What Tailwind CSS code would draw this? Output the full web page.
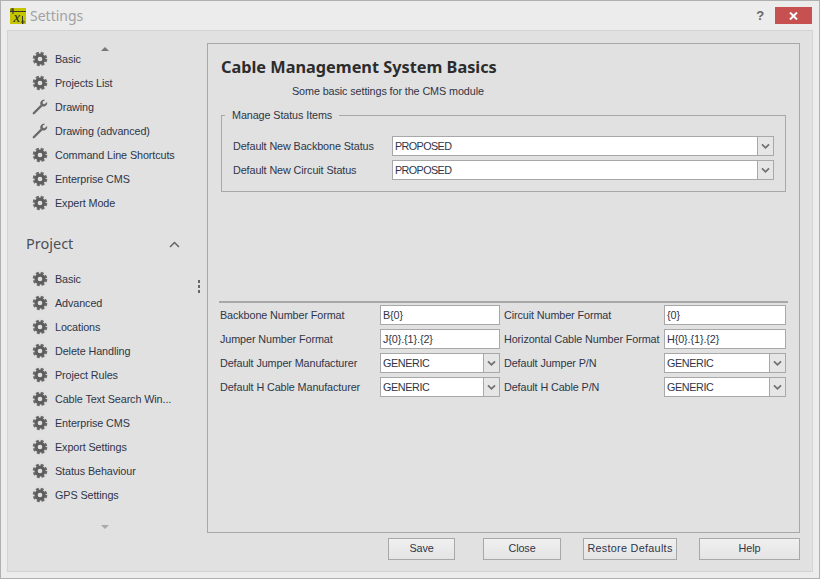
<!DOCTYPE html>
<html lang="en">
<head>
<meta charset="UTF-8">
<title>Settings</title>
<script src="https://cdn.jsdelivr.net/npm/@tailwindcss/browser@4"></script>
</head>
<body class="m-0 overflow-hidden">
<svg class="hidden">
  <symbol id="gear" viewBox="0 0 16 16">
    <circle cx="8" cy="8" r="5.8" fill="none" stroke="#6a6a6a" stroke-width="3" stroke-dasharray="2.8 1.75"/>
    <circle cx="8" cy="8" r="3.9" fill="none" stroke="#5e5e5e" stroke-width="3.2"/>
  </symbol>
  <symbol id="wrench" viewBox="0 0 18 18">
    <path d="M2 16 L10 8" stroke="#6a6a6a" stroke-width="2.6" stroke-linecap="round" fill="none"/>
    <path d="M17 3.4 L14 6 L12 5 L12.2 2.8 L14.8 1 C11.4 0.4 8.8 2.8 9.4 6.2 L11.4 8.4 C15 9 17.6 7 17 3.4 Z" fill="#6a6a6a"/>
  </symbol>
  <symbol id="chev" viewBox="0 0 10 8">
    <path d="M1 1.5 L5 5.5 L9 1.5" fill="none" stroke="#707070" stroke-width="2"/>
  </symbol>
</svg>

<div class="w-[820px] h-[579px] bg-[#ececec] border border-[#b0b0b0] flex flex-col text-[#2f3547] text-[10.8px] tracking-[-0.1px] whitespace-nowrap font-['Liberation_Sans',sans-serif]">
  <!-- title bar -->
  <div class="h-[29px] flex items-center shrink-0">
    <svg class="ml-[9px] w-4 h-4" viewBox="0 0 16 16">
      <rect width="16" height="16" fill="#c4c400"/>
      <path d="M0 3.5 H16 M3 0 V6 M12.5 8 V16" stroke="#333" stroke-width="1" fill="none"/>
      <circle cx="2" cy="2" r="1.2" fill="none" stroke="#333" stroke-width=".8"/>
      <circle cx="13" cy="14" r="1.2" fill="none" stroke="#333" stroke-width=".8"/>
      <text x="3.5" y="13.5" font-size="15" font-style="italic" font-family="Liberation Serif, serif" fill="#222">x</text>
    </svg>
    <span class="ml-1 text-[14px] tracking-normal text-[#a2a2a2] font-['Noto_Sans',sans-serif]">Settings</span>
    <span class="ml-auto mr-[11px] text-[13px] font-bold text-[#666]">?</span>
    <div class="w-[37px] h-[17px] mr-[7px] bg-[#c75050] flex items-center justify-center">
      <svg class="w-[9px] h-[8px]" viewBox="0 0 9 8"><path d="M1 .5 L8 7.5 M8 .5 L1 7.5" stroke="#fff" stroke-width="2"/></svg>
    </div>
  </div>

  <!-- inner frame -->
  <div class="mx-[6px] mb-[6px] flex-1 bg-[#e1e1e1] border border-[#d3d3d3] flex min-h-0">
    <!-- sidebar -->
    <div class="w-[199px] shrink-0 relative pl-[24px] pt-[16px]">
      <div class="absolute left-[93px] top-[16px] w-0 h-0 border-x-[4px] border-x-transparent border-b-[4px] border-b-[#777]"></div>
      <div class="absolute left-[93px] bottom-[42px] w-0 h-0 border-x-[4px] border-x-transparent border-t-[4px] border-t-[#aaa]"></div>
      <div class="absolute left-[190px] top-[249px] flex flex-col gap-[2px]">
        <i class="block w-[2px] h-[3px] bg-[#666]"></i><i class="block w-[2px] h-[3px] bg-[#666]"></i><i class="block w-[2px] h-[3px] bg-[#666]"></i>
      </div>
      <div class="flex flex-col">
        <div class="h-6 flex items-center"><svg class="w-4 h-4"><use href="#gear"/></svg><span class="ml-[7px]">Basic</span></div>
        <div class="h-6 flex items-center"><svg class="w-4 h-4"><use href="#gear"/></svg><span class="ml-[7px]">Projects List</span></div>
        <div class="h-6 flex items-center"><svg class="w-4 h-4"><use href="#wrench"/></svg><span class="ml-[7px]">Drawing</span></div>
        <div class="h-6 flex items-center"><svg class="w-4 h-4"><use href="#wrench"/></svg><span class="ml-[7px]">Drawing (advanced)</span></div>
        <div class="h-6 flex items-center"><svg class="w-4 h-4"><use href="#gear"/></svg><span class="ml-[7px]">Command Line Shortcuts</span></div>
        <div class="h-6 flex items-center"><svg class="w-4 h-4"><use href="#gear"/></svg><span class="ml-[7px]">Enterprise CMS</span></div>
        <div class="h-6 flex items-center"><svg class="w-4 h-4"><use href="#gear"/></svg><span class="ml-[7px]">Expert Mode</span></div>
      </div>
      <div class="h-[28px] mt-[15px] mb-[9px] -ml-[6px] flex items-center justify-between text-[14.5px] tracking-normal text-[#4a5058] font-['Noto_Sans',sans-serif]">
        <span>Project</span>
        <svg class="w-[11px] h-[7px] mr-[27px]" viewBox="0 0 11 7"><path d="M1 6 L5.5 1.5 L10 6" fill="none" stroke="#666" stroke-width="1.5"/></svg>
      </div>
      <div class="flex flex-col">
        <div class="h-6 flex items-center"><svg class="w-4 h-4"><use href="#gear"/></svg><span class="ml-[7px]">Basic</span></div>
        <div class="h-6 flex items-center"><svg class="w-4 h-4"><use href="#gear"/></svg><span class="ml-[7px]">Advanced</span></div>
        <div class="h-6 flex items-center"><svg class="w-4 h-4"><use href="#gear"/></svg><span class="ml-[7px]">Locations</span></div>
        <div class="h-6 flex items-center"><svg class="w-4 h-4"><use href="#gear"/></svg><span class="ml-[7px]">Delete Handling</span></div>
        <div class="h-6 flex items-center"><svg class="w-4 h-4"><use href="#gear"/></svg><span class="ml-[7px]">Project Rules</span></div>
        <div class="h-6 flex items-center"><svg class="w-4 h-4"><use href="#gear"/></svg><span class="ml-[7px]">Cable Text Search Win...</span></div>
        <div class="h-6 flex items-center"><svg class="w-4 h-4"><use href="#gear"/></svg><span class="ml-[7px]">Enterprise CMS</span></div>
        <div class="h-6 flex items-center"><svg class="w-4 h-4"><use href="#gear"/></svg><span class="ml-[7px]">Export Settings</span></div>
        <div class="h-6 flex items-center"><svg class="w-4 h-4"><use href="#gear"/></svg><span class="ml-[7px]">Status Behaviour</span></div>
        <div class="h-6 flex items-center"><svg class="w-4 h-4"><use href="#gear"/></svg><span class="ml-[7px]">GPS Settings</span></div>
      </div>
    </div>

    <!-- right column -->
    <div class="flex-1 flex flex-col pt-[12px] pr-[12px]">
      <div class="h-[490px] border border-[#a8a8a8] pl-[13px] pr-[13px] pt-[12px]">
        <h1 class="text-[16.3px] tracking-normal font-bold leading-[22px] text-[#2c2c2c] font-['Noto_Sans',sans-serif]">Cable Management System Basics</h1>
        <p class="ml-[71px] mt-[5px] leading-[16px]">Some basic settings for the CMS module</p>
        <fieldset class="mt-[8px] border border-[#a8a8a8] pl-[11px] pr-[11px] h-[85px]">
          <legend class="px-[7px] -ml-[8px] leading-[16px]">Manage Status Items</legend>
          <div class="mt-[13px] flex items-center h-5 mb-1">
            <span class="w-[159px]">Default New Backbone Status</span>
            <div class="flex-1 h-5 bg-white border border-[#a8a8a8] flex"><span class="flex-1 pl-[2px] leading-[18px] tracking-[-0.6px]">PROPOSED</span><span class="w-4 bg-[#e6e6e6] border-l border-[#a8a8a8] flex items-center justify-center"><svg class="w-[9px] h-[7px]"><use href="#chev"/></svg></span></div>
          </div>
          <div class="flex items-center h-5">
            <span class="w-[159px]">Default New Circuit Status</span>
            <div class="flex-1 h-5 bg-white border border-[#a8a8a8] flex"><span class="flex-1 pl-[2px] leading-[18px] tracking-[-0.6px]">PROPOSED</span><span class="w-4 bg-[#e6e6e6] border-l border-[#a8a8a8] flex items-center justify-center"><svg class="w-[9px] h-[7px]"><use href="#chev"/></svg></span></div>
          </div>
        </fieldset>
        <div class="mt-[109px] -ml-[2px] -mr-[2px] border-t-2 border-[#a8a8a8] pt-[2px] pl-[1px] pr-[2px] grid grid-cols-[160px_120px_4px_160px_122px] auto-rows-[20px] gap-y-1 items-center">
          <span>Backbone Number Format</span>
          <div class="h-5 bg-white border border-[#a8a8a8] pl-[2px] leading-[18px]">B{0}</div><span></span>
          <span>Circuit Number Format</span>
          <div class="h-5 bg-white border border-[#a8a8a8] pl-[2px] leading-[18px]">{0}</div>
          <span>Jumper Number Format</span>
          <div class="h-5 bg-white border border-[#a8a8a8] pl-[2px] leading-[18px]">J{0}.{1}.{2}</div><span></span>
          <span>Horizontal Cable Number Format</span>
          <div class="h-5 bg-white border border-[#a8a8a8] pl-[2px] leading-[18px]">H{0}.{1}.{2}</div>
          <span>Default Jumper Manufacturer</span>
          <div class="h-5 bg-white border border-[#a8a8a8] flex"><span class="flex-1 pl-[2px] leading-[18px] tracking-[-0.4px]">GENERIC</span><span class="w-4 bg-[#e6e6e6] border-l border-[#a8a8a8] flex items-center justify-center"><svg class="w-[9px] h-[7px]"><use href="#chev"/></svg></span></div><span></span>
          <span>Default Jumper P/N</span>
          <div class="h-5 bg-white border border-[#a8a8a8] flex"><span class="flex-1 pl-[2px] leading-[18px] tracking-[-0.4px]">GENERIC</span><span class="w-4 bg-[#e6e6e6] border-l border-[#a8a8a8] flex items-center justify-center"><svg class="w-[9px] h-[7px]"><use href="#chev"/></svg></span></div>
          <span>Default H Cable Manufacturer</span>
          <div class="h-5 bg-white border border-[#a8a8a8] flex"><span class="flex-1 pl-[2px] leading-[18px] tracking-[-0.4px]">GENERIC</span><span class="w-4 bg-[#e6e6e6] border-l border-[#a8a8a8] flex items-center justify-center"><svg class="w-[9px] h-[7px]"><use href="#chev"/></svg></span></div><span></span>
          <span>Default H Cable P/N</span>
          <div class="h-5 bg-white border border-[#a8a8a8] flex"><span class="flex-1 pl-[2px] leading-[18px] tracking-[-0.4px]">GENERIC</span><span class="w-4 bg-[#e6e6e6] border-l border-[#a8a8a8] flex items-center justify-center"><svg class="w-[9px] h-[7px]"><use href="#chev"/></svg></span></div>
        </div>
      </div>
      <div class="mt-[5px] flex">
        <button class="ml-[181px] w-[67px] h-[22px] pb-[1px] border border-[#a8a8a8] bg-gradient-to-b from-[#f0f0f0] to-[#e4e4e4]">Save</button>
        <button class="ml-[28px] w-[78px] h-[22px] pb-[1px] border border-[#a8a8a8] bg-gradient-to-b from-[#f0f0f0] to-[#e4e4e4]">Close</button>
        <button class="ml-[22px] w-[94px] h-[22px] pb-[1px] border border-[#a8a8a8] tracking-[0.3px] bg-gradient-to-b from-[#f0f0f0] to-[#e4e4e4]">Restore Defaults</button>
        <button class="ml-[22px] w-[101px] h-[22px] pb-[1px] border border-[#a8a8a8] bg-gradient-to-b from-[#f0f0f0] to-[#e4e4e4]">Help</button>
      </div>
    </div>
  </div>
</div>
</body>
</html>
